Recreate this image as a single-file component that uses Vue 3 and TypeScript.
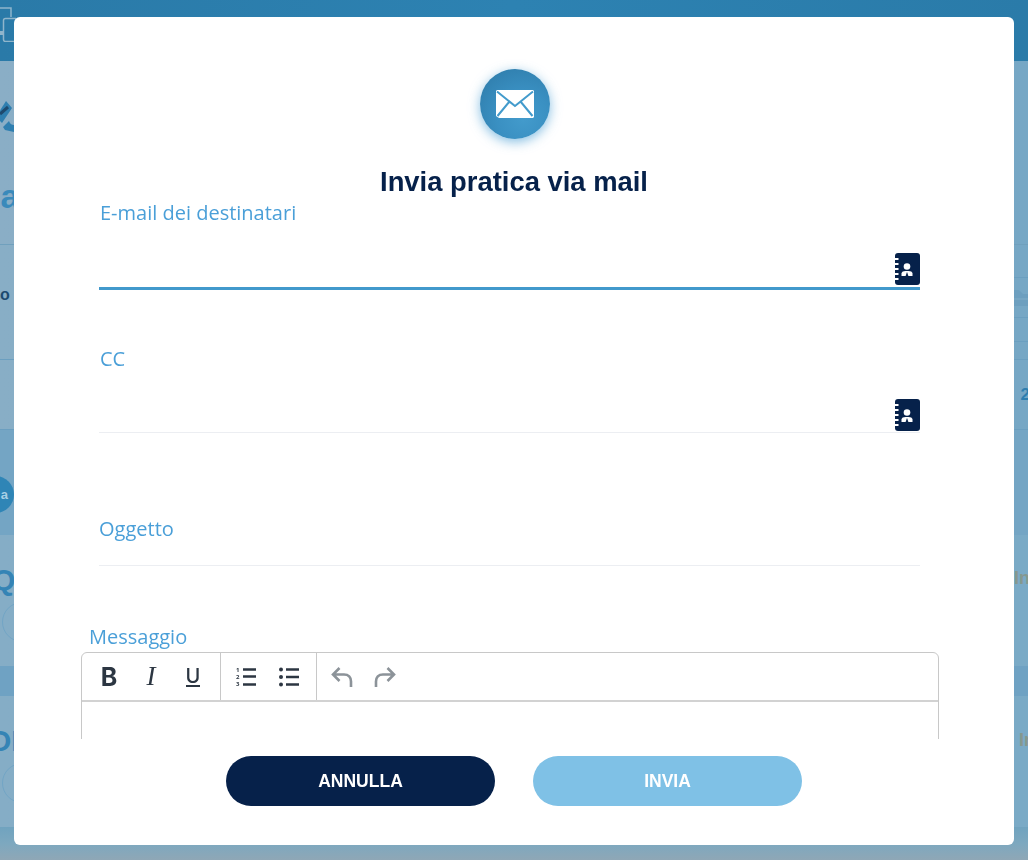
<script setup lang="ts">
import { ref } from 'vue';

const destinatari = ref('');
const cc = ref('');
const oggetto = ref('');
const spiralRows = [5, 10, 15, 20, 25];
</script>

<template>
  <div class="page">
    <header class="top-bar">
      <svg class="devices" width="16" height="42" viewBox="0 0 16 42">
        <path d="M-8 8H11V17" fill="none" stroke="#8fb5cb" stroke-width="1.5" />
        <path d="M0 33H3" fill="none" stroke="#8fb5cb" stroke-width="4" />
        <rect x="3.5" y="18.5" width="14" height="23" rx="2" fill="none" stroke="#8fb5cb" stroke-width="1.5" />
      </svg>
    </header>
    <section class="hero">
      <svg class="wrench" width="14" height="40" viewBox="0 0 14 40">
        <path d="M-4 18L6 2L12 9L2 24Z" fill="#2f7fb0" />
        <path d="M0 15L8 8" stroke="#1f4a6e" stroke-width="3" />
        <path d="M3 28L9 22C10 25 12 26 14 26V33L5 31Z" fill="#2f7fb0" />
      </svg>
      <span class="hero-title">ia</span>
    </section>
    <section class="row-info">
      <span class="info-left">o</span>
      <div class="info-right">
        <div class="line-seg seg-a"></div>
        <div class="line-seg seg-b">
          <svg width="14" height="16" viewBox="0 0 14 16">
            <path d="M0 0H5L9 4H14V16H0Z" fill="#6d9fbf" />
            <path d="M0 9H14" stroke="#7ba9c5" stroke-width="1.5" />
          </svg>
        </div>
        <div class="line-seg seg-c"></div>
      </div>
    </section>
    <section class="row-num"><span>2</span></section>
    <section class="row-pill"><span class="pill">a</span></section>
    <section class="row-card">
      <div class="card-left">
        <span class="card-title">Q</span>
        <span class="circle"></span>
      </div>
      <span class="card-right">In</span>
    </section>
    <div class="band"></div>
    <section class="row-card">
      <div class="card-left">
        <span class="card-title card-o">OI</span>
        <span class="circle"></span>
      </div>
      <span class="card-right card-right-low">In</span>
    </section>
    <div class="page-foot"></div>
  </div>

  <div class="overlay">
    <div class="modal">
      <div class="modal-body">
        <div class="mail-badge">
          <svg width="38" height="28" viewBox="0 0 38 28">
            <path d="M1 0H37L38 1V27L37 28H3L0 26V1Z" fill="#fff" />
            <path d="M1 1.5L19 16L37 1.5M1.5 26L13.5 11.5M36.5 26L24.5 11.5" fill="none" stroke="#439bcc" stroke-width="2" />
          </svg>
        </div>
        <h2 class="modal-title">Invia pratica via mail</h2>

        <div class="field field-to">
          <label class="field-label">E-mail dei destinatari</label>
          <div class="input-row active">
            <input v-model="destinatari" type="text" />
            <svg class="rubrica" width="25" height="32" viewBox="0 0 25 32">
              <rect width="25" height="32" rx="3" fill="#06214a" />
              <rect v-for="y in spiralRows" :key="y" x="0" :y="y" width="3.5" height="2" fill="#fff" />
              <circle cx="12" cy="13.5" r="3.3" fill="#fff" />
              <path d="M6.5 23V20.5C6.5 18.8 8.5 18 10.5 18H13.5C15.5 18 17.5 18.8 17.5 20.5V23Z" fill="#fff" />
              <path d="M12 19L10.6 23H13.4Z" fill="#06214a" />
            </svg>
          </div>
        </div>

        <div class="field field-cc">
          <label class="field-label">CC</label>
          <div class="input-row">
            <input v-model="cc" type="text" />
            <svg class="rubrica" width="25" height="32" viewBox="0 0 25 32">
              <rect width="25" height="32" rx="3" fill="#06214a" />
              <rect v-for="y in spiralRows" :key="y" x="0" :y="y" width="3.5" height="2" fill="#fff" />
              <circle cx="12" cy="13.5" r="3.3" fill="#fff" />
              <path d="M6.5 23V20.5C6.5 18.8 8.5 18 10.5 18H13.5C15.5 18 17.5 18.8 17.5 20.5V23Z" fill="#fff" />
              <path d="M12 19L10.6 23H13.4Z" fill="#06214a" />
            </svg>
          </div>
        </div>

        <div class="field field-subject">
          <label class="field-label subject-label">Oggetto</label>
          <div class="input-row subject-row">
            <input v-model="oggetto" type="text" />
          </div>
        </div>

        <label class="field-label message-label">Messaggio</label>
        <div class="editor">
          <div class="toolbar">
            <div class="tool-group group-format">
              <button class="tool tool-b" type="button">B</button>
              <button class="tool tool-i" type="button">I</button>
              <button class="tool tool-u" type="button"><span>U</span></button>
            </div>
            <div class="tool-group group-list">
              <button class="tool" type="button">
                <svg width="20" height="20" viewBox="0 0 20 20">
                  <text x="0" y="5" class="num">1</text>
                  <text x="0" y="12" class="num">2</text>
                  <text x="0" y="19" class="num">3</text>
                  <path d="M7 2.5H20M7 9.5H20M7 17.5H20" stroke="#2c3642" stroke-width="2.4" />
                </svg>
              </button>
              <button class="tool" type="button">
                <svg width="20" height="20" viewBox="0 0 20 20">
                  <circle cx="2" cy="2.5" r="2" fill="#2c3642" />
                  <circle cx="2" cy="10" r="2" fill="#2c3642" />
                  <circle cx="2" cy="17.5" r="2" fill="#2c3642" />
                  <path d="M7 2.5H20M7 10H20M7 17.5H20" stroke="#2c3642" stroke-width="2.4" />
                </svg>
              </button>
            </div>
            <div class="tool-group group-history">
              <button class="tool" type="button">
                <svg width="22" height="22" viewBox="0 0 22 22">
                  <path d="M8.5 2L2 8.5L8.5 15M2 8.5H13C17.5 8.5 20 11.5 20 15.5V21" fill="none" stroke="#8c9399" stroke-width="2.6" />
                </svg>
              </button>
              <button class="tool" type="button">
                <svg width="22" height="22" viewBox="0 0 22 22">
                  <path d="M13.5 2L20 8.5L13.5 15M20 8.5H9C4.5 8.5 2 11.5 2 15.5V21" fill="none" stroke="#8c9399" stroke-width="2.6" />
                </svg>
              </button>
            </div>
          </div>
          <div class="editor-area"></div>
        </div>
      </div>

      <div class="modal-footer">
        <button class="btn btn-cancel" type="button">ANNULLA</button>
        <button class="btn btn-send" type="button">INVIA</button>
      </div>
    </div>
  </div>
</template>

<style>
html,
body {
  margin: 0;
  overflow: hidden;
}
</style>

<style scoped>
.page {
  width: 1028px;
  height: 860px;
  overflow: hidden;
  background: #7ba9c5;
  font-family: "Liberation Sans", Arial, sans-serif;
}
.top-bar {
  height: 61px;
  background: linear-gradient(90deg, #2a7aa8, #2d82b2 50%, #2a7ba9);
  overflow: hidden;
}
.devices {
  display: block;
}
.hero {
  height: 183px;
  border-bottom: 1px solid #70a0bd;
  background: linear-gradient(90deg, #8aaec6, #76a7c5);
  overflow: hidden;
  display: flex;
  flex-direction: column;
}
.wrench {
  flex-shrink: 0;
  margin-top: 38px;
}
.hero-title {
  margin-top: 37px;
  margin-left: -9px;
  font-size: 34px;
  line-height: 40px;
  font-weight: 700;
  color: #3a8abb;
}
.row-info {
  height: 114px;
  display: flex;
  justify-content: space-between;
  background: linear-gradient(90deg, #88aec6, #76a7c5);
  border-bottom: 1px solid #6b9fc0;
}
.info-left {
  margin-top: 40px;
  font-size: 16px;
  line-height: 20px;
  font-weight: 700;
  color: #1d4b70;
}
.info-right {
  width: 14px;
}
.line-seg {
  box-sizing: border-box;
  border-bottom: 1px solid #6b9fc0;
}
.seg-a {
  height: 33px;
}
.seg-b {
  height: 40px;
  padding-top: 12px;
}
.seg-b svg {
  display: block;
}
.seg-c {
  height: 24px;
}
.row-num {
  height: 69px;
  display: flex;
  justify-content: flex-end;
  align-items: center;
  background: linear-gradient(90deg, #88aec6, #76a7c5);
  border-bottom: 1px solid #6b9fc0;
  font-size: 17px;
  font-weight: 700;
  color: #2f7fb0;
}
.row-num span {
  margin-right: -2px;
}
.row-pill {
  height: 105px;
  background: #74a5c4;
  overflow: hidden;
}
.pill {
  display: block;
  width: 38px;
  height: 37px;
  margin: 46px 0 0 -24px;
  border-radius: 19px;
  background: #2f85b6;
  color: #a9cfe4;
  font-size: 13px;
  font-weight: 700;
  line-height: 37px;
  text-align: right;
  box-sizing: border-box;
  padding-right: 6px;
}
.row-card {
  height: 131px;
  display: flex;
  justify-content: space-between;
  background: linear-gradient(90deg, #85adc6, #7aaac6);
  overflow: hidden;
}
.card-left {
  width: 14px;
  display: flex;
  flex-direction: column;
}
.card-title {
  margin-top: 28px;
  margin-left: -8px;
  font-size: 30px;
  line-height: 34px;
  font-weight: 700;
  color: #3584b5;
  white-space: nowrap;
}
.card-o {
  margin-left: -12px;
}
.circle {
  flex-shrink: 0;
  width: 40px;
  height: 40px;
  margin: 5px 0 0 2px;
  border-radius: 50%;
  border: 1px solid #72a5c5;
  box-sizing: border-box;
}
.card-right {
  margin-top: 33px;
  width: 14px;
  flex-shrink: 0;
  font-size: 18px;
  line-height: 20px;
  font-weight: 700;
  color: #86988f;
  white-space: nowrap;
  overflow: hidden;
}
.card-right-low {
  width: 9px;
  margin-top: 34px;
}
.band {
  height: 30px;
  background: #6fa2c3;
}
.page-foot {
  height: 33px;
  background: linear-gradient(180deg, #70a3bf, #7da8bf 50%, #8fa7b6);
}

.overlay {
  position: fixed;
  inset: 0;
}
.modal {
  width: 1000px;
  height: 828px;
  margin: 17px 0 0 14px;
  background: #fff;
  border-radius: 6px;
  display: flex;
  flex-direction: column;
  overflow: hidden;
  font-family: "Open Sans", sans-serif;
}
.modal-body {
  height: 722px;
  flex-shrink: 0;
  overflow: hidden;
  display: flex;
  flex-direction: column;
}
.mail-badge {
  flex-shrink: 0;
  width: 70px;
  height: 70px;
  margin: 52px 0 0 466px;
  border-radius: 50%;
  background: radial-gradient(circle at 62% 70%, #439bcc 0%, #3a90c2 40%, #2c78a6 100%);
  box-shadow: 0 3px 12px rgba(67, 155, 210, 0.65);
  display: flex;
  align-items: center;
  justify-content: center;
}
.modal-title {
  margin: 27px 0 0;
  font-family: "Liberation Sans", Arial, sans-serif;
  font-size: 27.4px;
  line-height: 32px;
  font-weight: 700;
  color: #06214a;
  text-align: center;
}
.field {
  flex-shrink: 0;
  margin: 0 94px 0 85px;
}
.field-to {
  margin-top: 3px;
}
.field-cc {
  margin-top: 57px;
}
.field-subject {
  margin-top: 84px;
}
.field-label {
  display: block;
  padding-left: 1px;
  font-size: 20px;
  line-height: 24px;
  color: #4a9fd8;
}
.subject-label {
  padding-left: 0;
}
.input-row {
  height: 61px;
  display: flex;
  align-items: flex-end;
  border-bottom: 1px solid #eceef2;
}
.input-row.active {
  height: 62px;
  border-bottom: 3px solid #4199cc;
}
.input-row.active .rubrica {
  margin-bottom: 2px;
}
.subject-row {
  height: 24px;
}
.input-row input {
  flex: 1;
  min-width: 0;
  height: 30px;
  border: 0;
  outline: 0;
  padding: 0;
  background: transparent;
  font: inherit;
}
.rubrica {
  flex-shrink: 0;
  margin-bottom: 1px;
}
.message-label {
  flex-shrink: 0;
  margin: 59px 0 0 75px;
  padding-left: 0;
}
.editor {
  flex-shrink: 0;
  width: 858px;
  margin: 3px 0 0 67px;
  height: 200px;
  box-sizing: border-box;
  border: 1px solid #c8c8c8;
  border-radius: 6px 6px 0 0;
}
.toolbar {
  height: 47px;
  display: flex;
  border-bottom: 2px solid #d2d2d2;
}
.tool-group {
  display: flex;
  align-items: center;
  border-right: 1px solid #c8c8c8;
}
.group-format {
  width: 139px;
  padding-left: 7px;
  gap: 2px;
  box-sizing: border-box;
}
.group-list {
  width: 96px;
  box-sizing: border-box;
  padding-left: 5px;
  gap: 3px;
}
.group-history {
  border-right: 0;
  padding-left: 5px;
  gap: 3px;
}
.tool {
  width: 40px;
  height: 40px;
  padding: 0;
  border: 0;
  background: transparent;
  display: flex;
  align-items: center;
  justify-content: center;
  color: #2c3642;
}
.tool-b {
  font-family: Inter, sans-serif;
  font-size: 25px;
  font-weight: 700;
}
.tool-i {
  font-family: "Liberation Serif", serif;
  font-size: 27px;
  font-style: italic;
}
.tool-u {
  font-family: Inter, sans-serif;
  font-size: 20px;
  font-weight: 500;
}
.tool-u span {
  display: block;
  line-height: 18px;
  border-bottom: 2px solid #2c3642;
}
.num {
  font-family: "Open Sans", sans-serif;
  font-size: 6px;
  font-weight: 700;
  fill: #2c3642;
}
.modal-footer {
  flex: 1;
  display: flex;
  justify-content: center;
  gap: 38px;
  padding-top: 17px;
}
.btn {
  width: 269px;
  height: 50px;
  border: 0;
  border-radius: 25px;
  color: #fff;
  font-family: "Liberation Sans", Arial, sans-serif;
  font-size: 17.5px;
  font-weight: 700;
}
.btn-cancel {
  background: #06214a;
}
.btn-send {
  background: #7fc1e6;
}
</style>
